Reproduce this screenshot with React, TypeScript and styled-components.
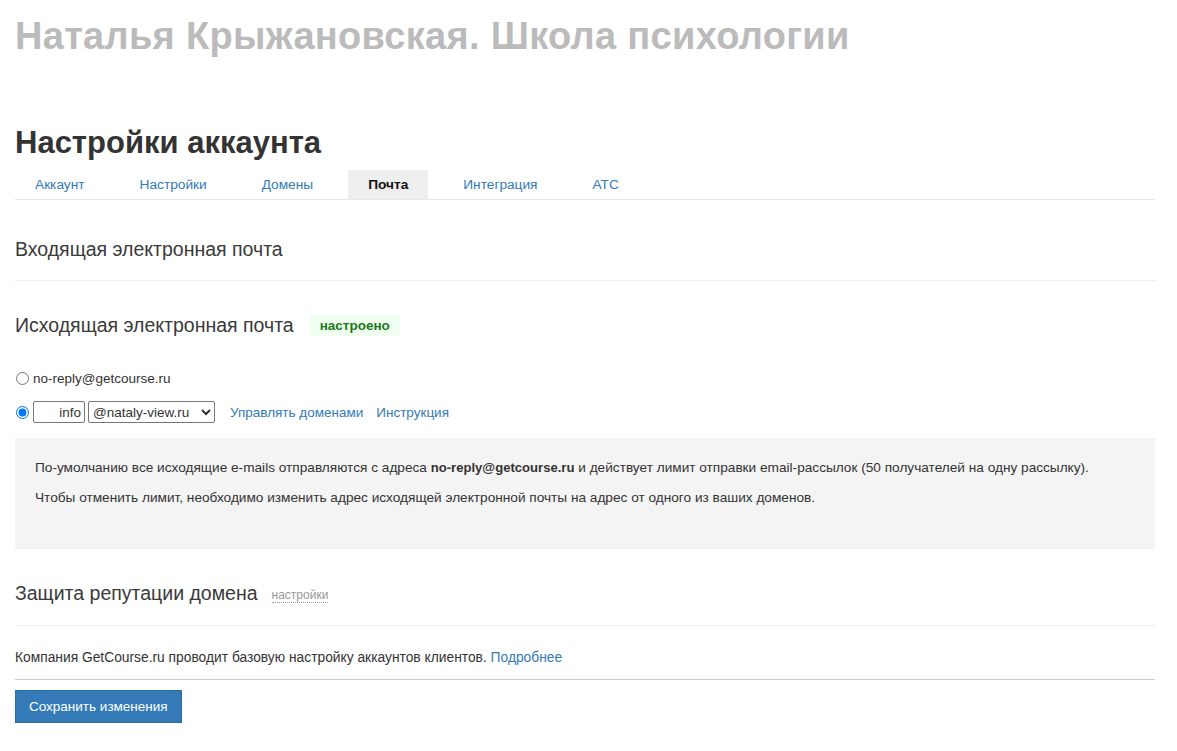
import React from 'react';
import styled, { createGlobalStyle } from 'styled-components';

const GlobalStyle = createGlobalStyle`
    html, body {
        margin: 0;
        padding: 0;
        background: #fff;
    }
    body {
        font-family: 'Liberation Sans', Arial, sans-serif;
        font-size: 13.5px;
        color: #333;
    }
`;

const Page = styled.div`
    width: 1140px;
    padding: 0 15px;
`;

const SchoolTitle = styled.h1`
    margin: 0;
    padding-top: 13px;
    height: 90px;
    font-size: 38px;
    line-height: 46px;
    font-weight: 700;
    color: #bbb;
    letter-spacing: 0.3px;
`;

const PageTitle = styled.h2`
    margin: 0;
    padding-top: 21px;
    font-size: 31px;
    line-height: 38px;
    font-weight: 700;
    color: #333;
`;

const Tabs = styled.ul`
    display: flex;
    gap: 15px;
    margin: 8px 0 0;
    padding: 0;
    list-style: none;
    border-bottom: 1px solid #e7e7e7;
`;

const Tab = styled.li<{ $active?: boolean }>`
    padding: 0 20px;
    height: 29px;
    line-height: 29px;
    font-size: 13.7px;
    color: ${p => (p.$active ? '#111' : '#337ab7')};
    font-weight: ${p => (p.$active ? 700 : 400)};
    background: ${p => (p.$active ? '#eee' : 'transparent')};
    cursor: pointer;
`;

const Section = styled.div<{ $top: number; $bottom: number; $noLine?: boolean }>`
    padding: ${p => p.$top}px 0 ${p => p.$bottom}px;
    border-bottom: ${p => (p.$noLine ? 'none' : '1px solid #eee')};
`;

const SectionTitle = styled.h3`
    display: flex;
    align-items: center;
    gap: 16px;
    margin: 0;
    font-size: 19.5px;
    line-height: 28px;
    font-weight: 400;
    color: #3a3a3a;
`;

const Badge = styled.span`
    display: inline-block;
    padding: 0 10px;
    height: 21px;
    line-height: 21px;
    font-size: 13.5px;
    font-weight: 700;
    color: #1a7a1a;
    background: #f0fff0;
`;

const HintLink = styled.span`
    font-size: 12px;
    color: #999;
    border-bottom: 1px dotted #999;
    line-height: 13px;
    margin-top: 5px;
    margin-left: -2px;
`;

const Options = styled.div`
    padding-top: 32px;
    display: flex;
    flex-direction: column;
    gap: 15px;
`;

const OptionRow = styled.label`
    display: flex;
    align-items: center;
    gap: 3px;
    font-size: 13.5px;
    color: #333;
`;

const Radio = styled.input`
    margin: 0 1px 0 1px;
    width: 13px;
    height: 13px;
`;

const LocalPart = styled.input`
    box-sizing: border-box;
    width: 52px;
    height: 22px;
    border: 1px solid #767676;
    border-radius: 2px;
    padding: 0 3px;
    text-align: right;
    font-family: inherit;
    font-size: 13.5px;
    color: #333;
`;

const DomainSelect = styled.select`
    box-sizing: border-box;
    width: 127px;
    height: 22px;
    border: 1px solid #767676;
    border-radius: 2px;
    font-family: inherit;
    font-size: 13.5px;
    color: #333;
    background: #fff;
`;

const Links = styled.div`
    display: flex;
    gap: 13px;
    margin-left: 12px;
`;

const Link = styled.a`
    color: #337ab7;
    text-decoration: none;
    cursor: pointer;
`;

const InfoBox = styled.div`
    margin-top: 15px;
    padding: 20px 20px 31px;
    background: #f4f4f4;
    font-size: 13.65px;
    line-height: 20px;
    color: #333;

    p {
        margin: 0 0 10px;
    }

    b {
        font-size: 13.1px;
    }
`;

const Note = styled.div`
    padding: 22px 0 11px;
    border-bottom: 1px solid #ccc;
    font-size: 13.8px;
    line-height: 20px;
`;

const SaveButton = styled.button`
    margin-top: 10px;
    height: 33px;
    padding: 0 13px;
    border: 1px solid #2e6da4;
    background: #337ab7;
    color: #fff;
    font-family: inherit;
    font-size: 13.5px;
    cursor: pointer;
`;

const tabs = ['Аккаунт', 'Настройки', 'Домены', 'Почта', 'Интеграция', 'АТС'];

export default function App() {
    return (
        <Page>
            <GlobalStyle />
            <SchoolTitle>Наталья Крыжановская. Школа психологии</SchoolTitle>
            <PageTitle>Настройки аккаунта</PageTitle>
            <Tabs>
                {tabs.map(t => (
                    <Tab key={t} $active={t === 'Почта'}>
                        {t}
                    </Tab>
                ))}
            </Tabs>

            <Section $top={35} $bottom={17}>
                <SectionTitle>Входящая электронная почта</SectionTitle>
            </Section>

            <Section $top={30} $bottom={0} $noLine>
                <SectionTitle>
                    Исходящая электронная почта
                    <Badge>настроено</Badge>
                </SectionTitle>
                <Options>
                    <OptionRow>
                        <Radio type="radio" name="from" />
                        no-reply@getcourse.ru
                    </OptionRow>
                    <OptionRow>
                        <Radio type="radio" name="from" defaultChecked />
                        <LocalPart defaultValue="info" />
                        <DomainSelect defaultValue="nataly">
                            <option value="nataly">@nataly-view.ru</option>
                        </DomainSelect>
                        <Links>
                            <Link>Управлять доменами</Link>
                            <Link>Инструкция</Link>
                        </Links>
                    </OptionRow>
                </Options>
                <InfoBox>
                    <p>
                        По-умолчанию все исходящие e-mails отправляются с адреса <b>no-reply@getcourse.ru</b> и
                        действует лимит отправки email-рассылок (50 получателей на одну рассылку).
                    </p>
                    <p>Чтобы отменить лимит, необходимо изменить адрес исходящей электронной почты на адрес от одного из ваших доменов.</p>
                </InfoBox>
            </Section>

            <Section $top={30} $bottom={18}>
                <SectionTitle>
                    Защита репутации домена
                    <HintLink>настройки</HintLink>
                </SectionTitle>
            </Section>

            <Note>
                Компания GetCourse.ru проводит базовую настройку аккаунтов клиентов. <Link>Подробнее</Link>
            </Note>

            <SaveButton>Сохранить изменения</SaveButton>
        </Page>
    );
}
